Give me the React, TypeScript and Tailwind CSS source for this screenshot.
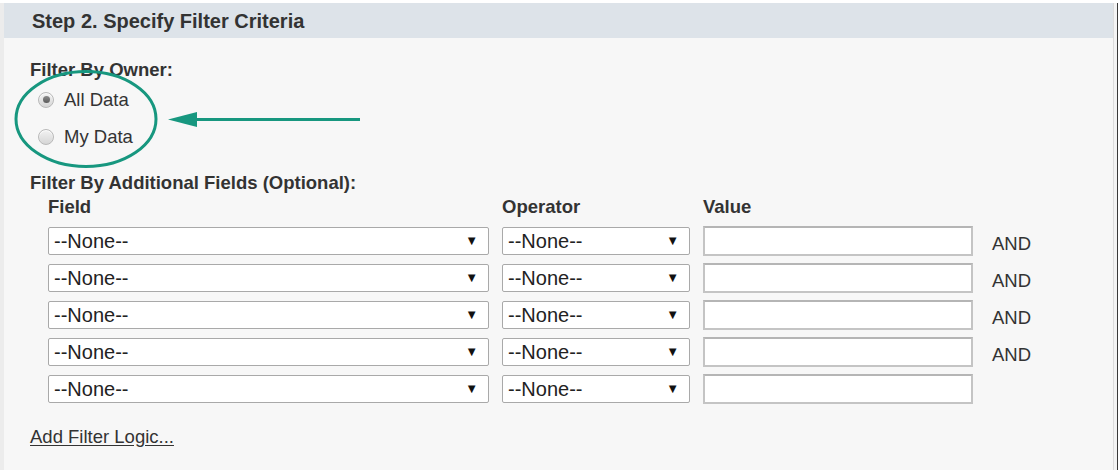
import React from "react";

const rows = [true, true, true, true, false];

function Radio({ checked }: { checked: boolean }) {
  return (
    <span className="w-[16px] h-[16px] rounded-full border border-[#b9b9b9] bg-gradient-to-b from-[#f2f2f2] to-[#d6d6d6] flex items-center justify-center shadow-[inset_0_1px_1px_rgba(255,255,255,0.9)]">
      {checked && <span className="w-[7px] h-[7px] rounded-full bg-gradient-to-b from-[#8a8a8a] to-[#5c5c5c]" />}
    </span>
  );
}

function FakeSelect({ width }: { width: string }) {
  return (
    <div className={`${width} h-[28px] bg-white border border-[#a9a9a9] rounded-[2px] flex items-center justify-between pl-[5px] pr-[10px] text-[20px] text-[#222]`}>
      <span>--None--</span>
      <span className="text-[13px] text-[#111]">▼</span>
    </div>
  );
}

export default function App() {
  return (
    <div
      className="w-[1118px] h-[470px] bg-white pt-[3px] flex flex-col text-[#333]"
      style={{ fontFamily: '"Liberation Sans", Arial, sans-serif' }}
    >
      <div className="flex-1 flex">
        <div className="flex-1 flex flex-col border-l-[4px] border-[#ececec] border-r border-r-[#dcdcdc] relative">
          {/* header band */}
          <div className="h-[35px] bg-[#dde3e9] flex items-center pl-[28px]">
            <h2 className="text-[20px] font-bold text-[#333]">Step 2. Specify Filter Criteria</h2>
          </div>

          {/* body */}
          <div className="flex-1 bg-[#f7f7f7] pl-[26px]">
            <div className="mt-[21px] h-[22px] leading-[22px] text-[18.5px] font-bold">Filter By Owner:</div>
            <div className="flex flex-col pl-[8px]">
              <label className="h-[37px] flex items-center gap-[10px] text-[18.5px]">
                <Radio checked />
                <span>All Data</span>
              </label>
              <label className="h-[37px] flex items-center gap-[10px] text-[18.5px]">
                <Radio checked={false} />
                <span>My Data</span>
              </label>
            </div>

            <div className="mt-[17px] h-[22px] leading-[22px] text-[18.5px] font-bold">
              Filter By Additional Fields (Optional):
            </div>

            <div className="pl-[18px]">
              <div className="mt-[2px] h-[22px] leading-[22px] flex text-[18.5px] font-bold">
                <span className="w-[454px]">Field</span>
                <span className="w-[201px]">Operator</span>
                <span>Value</span>
              </div>

              <div className="mt-[8px] flex flex-col gap-[7px]">
                {rows.map((and, i) => (
                  <div key={i} className="h-[30px] flex items-center">
                    <FakeSelect width="w-[441px]" />
                    <div className="w-[13px]" />
                    <FakeSelect width="w-[188px]" />
                    <div className="w-[13px]" />
                    <div className="w-[270px] h-[30px] bg-white border-2 border-[#c4c4c4] border-t-[#b5b5b5]" />
                    {and && <span className="ml-[19px] mt-[6px] text-[18.5px] text-[#333]">AND</span>}
                  </div>
                ))}
              </div>
            </div>

            <div className="mt-[22px] h-[22px] leading-[22px]">
              <a className="text-[18.5px] text-[#333] underline underline-offset-2 cursor-pointer">Add Filter Logic...</a>
            </div>
          </div>

          {/* annotation: ellipse and arrow */}
          <svg
            className="absolute left-[-4px] top-[-3px] pointer-events-none"
            width="400"
            height="200"
            viewBox="0 0 400 200"
          >
            <ellipse cx="86" cy="119" rx="70" ry="47.5" fill="none" stroke="#17977f" strokeWidth="3" />
            <line x1="360" y1="119.5" x2="192" y2="119.5" stroke="#17977f" strokeWidth="3" />
            <polygon points="168,119.5 197,112 197,127" fill="#17977f" />
          </svg>
        </div>
        <div className="w-[3px] bg-[#f4f4f4]" />
        <div className="w-px bg-[#3a3a3a]" />
      </div>
    </div>
  );
}
